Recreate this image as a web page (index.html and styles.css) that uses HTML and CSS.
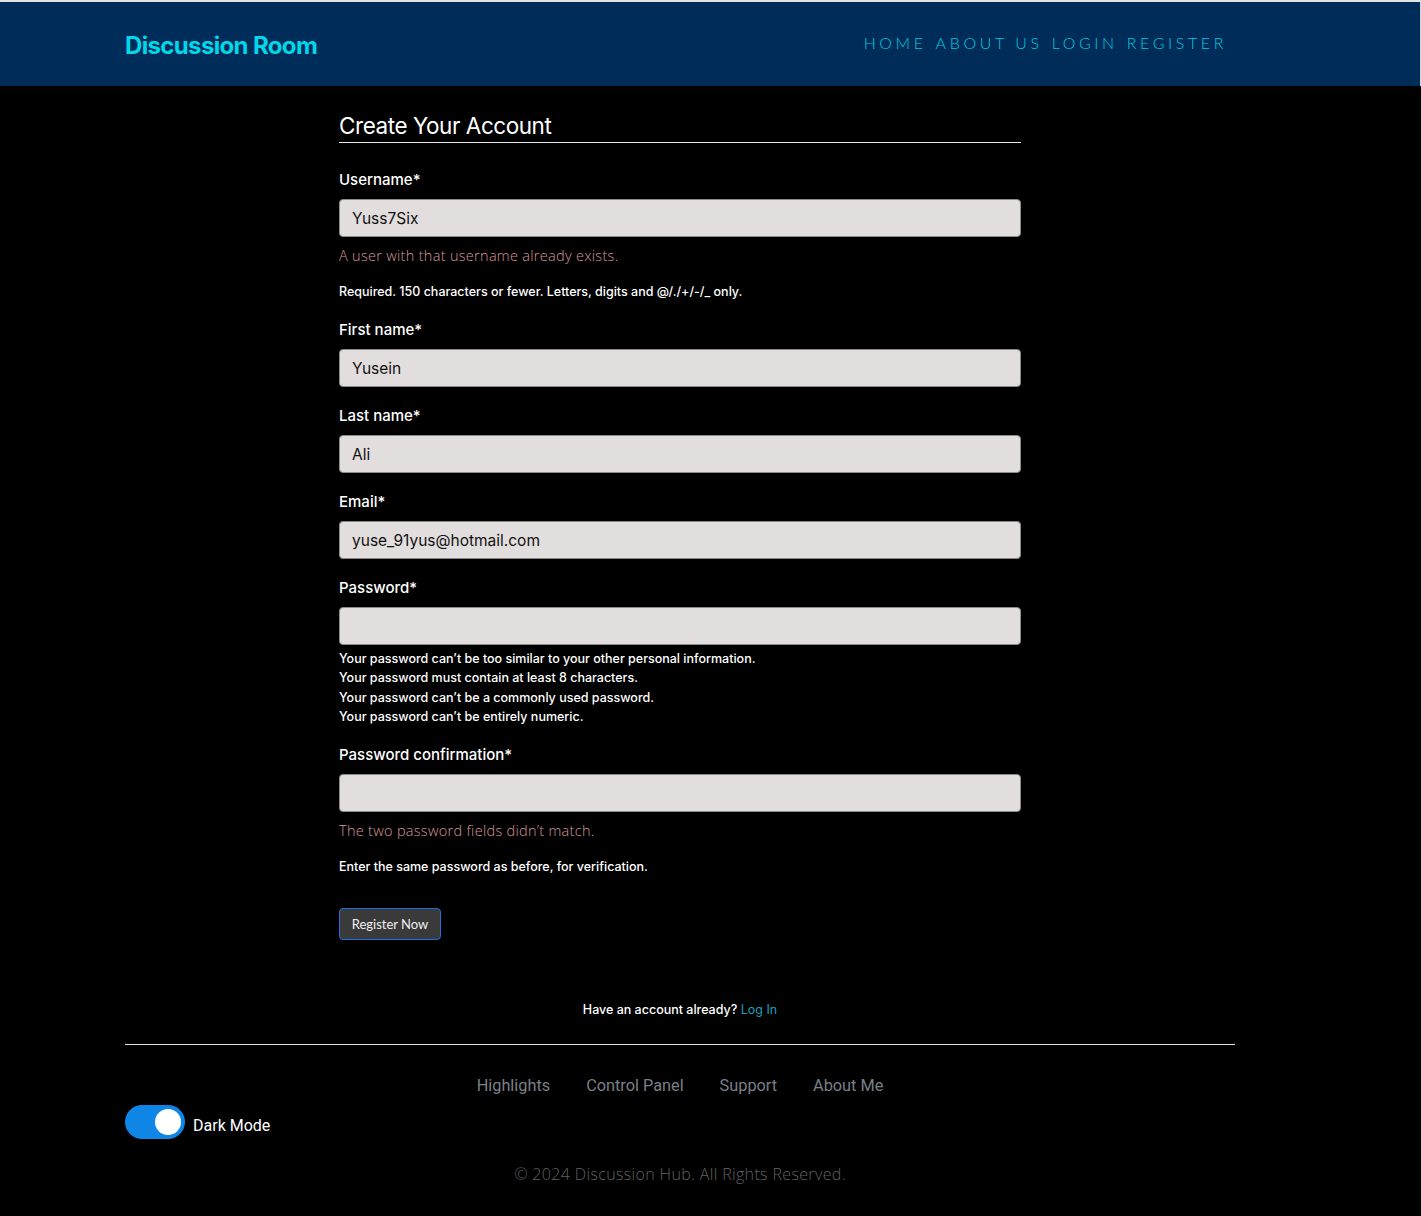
FILE: index.html
```html
<!DOCTYPE html>
<html lang="en">
<head>
<meta charset="utf-8">
<title>Discussion Room - Register</title>
<link rel="stylesheet" href="styles.css">
</head>
<body>
<header class="site-header">
  <div class="container header-inner">
    <a class="brand" href="#">Discussion Room</a>
    <nav class="main-nav">
      <a href="#">HOME</a>
      <a href="#">ABOUT US</a>
      <a href="#">LOGIN</a>
      <a href="#">REGISTER</a>
    </nav>
  </div>
</header>

<main class="container main">
  <form class="register-form">
    <h2 class="form-title">Create Your Account</h2>

    <div class="field field-first">
      <label class="label">Username*</label>
      <input class="input" type="text" value="Yuss7Six">
      <p class="error">A user with that username already exists.</p>
      <p class="help">Required. 150 characters or fewer. Letters, digits and @/./+/-/_ only.</p>
    </div>

    <div class="field">
      <label class="label">First name*</label>
      <input class="input" type="text" value="Yusein">
    </div>

    <div class="field">
      <label class="label">Last name*</label>
      <input class="input" type="text" value="Ali">
    </div>

    <div class="field">
      <label class="label">Email*</label>
      <input class="input" type="text" value="yuse_91yus@hotmail.com">
    </div>

    <div class="field">
      <label class="label">Password*</label>
      <input class="input" type="password">
      <ul class="help-list">
        <li>Your password can’t be too similar to your other personal information.</li>
        <li>Your password must contain at least 8 characters.</li>
        <li>Your password can’t be a commonly used password.</li>
        <li>Your password can’t be entirely numeric.</li>
      </ul>
    </div>

    <div class="field">
      <label class="label">Password confirmation*</label>
      <input class="input" type="password">
      <p class="error">The two password fields didn’t match.</p>
      <p class="help">Enter the same password as before, for verification.</p>
    </div>

    <button class="btn-register" type="button">Register Now</button>
  </form>

  <p class="have-account">Have an account already? <a href="#">Log In</a></p>
</main>

<footer class="container site-footer">
  <hr class="footer-rule">
  <nav class="footer-nav">
    <a href="#">Highlights</a>
    <a href="#">Control Panel</a>
    <a href="#">Support</a>
    <a href="#">About Me</a>
  </nav>
  <div class="dark-toggle">
    <span class="switch"><span class="knob"></span></span>
    <span class="toggle-label">Dark Mode</span>
  </div>
  <p class="copyright">© 2024 Discussion Hub. All Rights Reserved.</p>
</footer>
</body>
</html>
```

FILE: styles.css
```css
* { box-sizing: border-box; }

html, body {
  margin: 0;
  padding: 0;
  background: #000;
}

body {
  font-family: Inter, "Noto Sans", sans-serif;
  color: #fff;
  min-height: 1216px;
}

.container {
  width: 1110px;
  margin-left: 125px;
}

/* Header */
.site-header {
  background: #002c5a;
  border-top: 2px solid #e4e4e4;
  border-right: 1px solid #cfd6de;
  height: 86px;
}

.header-inner {
  display: flex;
  align-items: center;
  justify-content: space-between;
  height: 84px;
  padding-right: 8px;
}

.brand {
  font-family: Inter, sans-serif;
  font-weight: 700;
  font-size: 24px;
  letter-spacing: -0.65px;
  color: #00d7e9;
  text-decoration: none;
  margin-top: 2px;
}

.main-nav {
  display: flex;
  gap: 9px;
  margin-top: -4px;
}

.main-nav a {
  font-family: Lato, sans-serif;
  font-weight: 300;
  font-size: 16px;
  letter-spacing: 3.6px;
  color: #00c8dc;
  text-decoration: none;
}

/* Main form */
.main {
  display: flex;
  flex-direction: column;
  align-items: center;
}

.register-form {
  width: 682px;
  padding-top: 25px;
}

.form-title {
  font-family: Inter, sans-serif;
  font-weight: 400;
  font-size: 22.5px;
  letter-spacing: -0.45px;
  margin: 0;
  padding-bottom: 1px;
  border-bottom: 1px solid #e8e8e8;
  line-height: 30px;
}

.field {
  display: flex;
  flex-direction: column;
}

.label {
  font-size: 15px;
  font-weight: 500;
  margin-top: 19px;
  line-height: 20px;
  margin-bottom: 9px;
}

.field-first .label {
  margin-top: 27px;
  margin-bottom: 9px;
}

.input {
  width: 100%;
  height: 38px;
  background: #e3dede;
  border: 1px solid #8c8888;
  border-radius: 4px;
  padding: 0 12px;
  font-family: Inter, sans-serif;
  font-size: 15.5px;
  color: #111;
}

.error {
  font-family: "Open Sans", sans-serif;
  font-weight: 300;
  font-size: 14.5px;
  letter-spacing: 0.3px;
  color: #d9979a;
  margin: 9px 0 0;
  line-height: 20px;
}

.help {
  font-size: 12.5px;
  font-weight: 500;
  margin: 18px 0 0;
  line-height: 16px;
}

.field-first .help { margin-bottom: 1px; }

.help-list {
  list-style: none;
  margin: 4px 0 -1px;
  padding: 0;
  font-size: 12.5px;
  font-weight: 500;
  line-height: 19.4px;
}

.btn-register {
  margin-top: 33px;
  width: 102px;
  height: 32px;
  background: #3a3a3a;
  border: 1px solid #1f6fe0;
  border-radius: 4px;
  color: #f0f0f0;
  font-family: Lato, sans-serif;
  font-weight: 400;
  font-size: 13px;
  padding: 0;
}

.have-account {
  font-size: 12.5px;
  font-weight: 500;
  margin: 62px 0 0;
  line-height: 16px;
}

.have-account a {
  color: #1c9fbd;
  font-weight: 400;
  text-decoration: none;
}

/* Footer */
.site-footer {
  padding-top: 26px;
}

.footer-rule {
  border: 0;
  border-top: 1px solid #e0e0e0;
  margin: 0;
}

.footer-nav {
  display: flex;
  justify-content: center;
  gap: 36px;
  margin-top: 31px;
}

.footer-nav a {
  font-family: Roboto, sans-serif;
  font-size: 16.3px;
  color: #7b7f86;
  text-decoration: none;
  line-height: 20px;
}

.dark-toggle {
  display: flex;
  align-items: flex-start;
  gap: 8px;
  margin-top: 9px;
}

.switch {
  width: 60px;
  height: 34px;
  border-radius: 17px;
  background: #0f86e6;
  display: flex;
  align-items: center;
  justify-content: flex-end;
  padding-right: 4px;
}

.knob {
  width: 26px;
  height: 26px;
  border-radius: 50%;
  background: #fff;
}

.toggle-label {
  font-family: Roboto, sans-serif;
  font-size: 16px;
  line-height: 20px;
  color: #fff;
  margin-top: 11px;
}

.copyright {
  text-align: center;
  font-family: "Open Sans", sans-serif;
  font-weight: 300;
  font-size: 16px;
  letter-spacing: 0.35px;
  color: #616161;
  margin: 25px 0 0;
  line-height: 20px;
}
```
